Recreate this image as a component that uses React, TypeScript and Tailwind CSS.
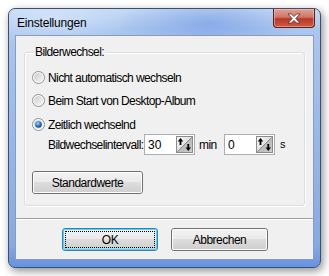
import React from "react";

const font = { fontFamily: '"Liberation Sans", Arial, sans-serif' };

function Radio({ checked }: { checked?: boolean }) {
  return (
    <svg width="13" height="13" viewBox="0 0 13 13" className="shrink-0">
      <defs>
        <linearGradient id={checked ? "rgc" : "rgu"} x1="0" y1="0" x2="1" y2="1">
          <stop offset="0" stopColor="#cbcbcb" />
          <stop offset="1" stopColor="#f7f7f7" />
        </linearGradient>
        <radialGradient id="rdot" cx="0.4" cy="0.35" r="0.7">
          <stop offset="0" stopColor="#a8dcff" />
          <stop offset="0.5" stopColor="#2a80d0" />
          <stop offset="1" stopColor="#0d3f86" />
        </radialGradient>
      </defs>
      <circle cx="6.5" cy="6.5" r="6" fill="#fff" stroke="#8e8f8f" strokeWidth="1" />
      <circle cx="6.5" cy="6.5" r="4.5" fill={`url(#${checked ? "rgc" : "rgu"})`} />
      {checked && <circle cx="6.5" cy="6.5" r="3.3" fill="url(#rdot)" />}
    </svg>
  );
}

function Spin() {
  return (
    <svg width="17" height="17" viewBox="0 0 17 17" className="shrink-0">
      <defs>
        <linearGradient id="spg" x1="0" y1="0" x2="1" y2="1">
          <stop offset="0" stopColor="#f6f6f6" />
          <stop offset="0.5" stopColor="#e2e2e2" />
          <stop offset="0.5" stopColor="#b9b9b9" />
          <stop offset="1" stopColor="#cfcfcf" />
        </linearGradient>
      </defs>
      <rect x="0.5" y="0.5" width="16" height="16" fill="url(#spg)" stroke="#8a8a8a" />
      <line x1="15.5" y1="1.5" x2="1.5" y2="15.5" stroke="#8a8a8a" />
      <path d="M4.5 2 L1.8 5.6 L3.6 5.6 L3.6 9 L5.4 9 L5.4 5.6 L7.2 5.6 Z" fill="#000" />
      <path d="M12.3 15 L9.6 11.4 L11.4 11.4 L11.4 8 L13.2 8 L13.2 11.4 L15 11.4 Z" fill="#000" />
    </svg>
  );
}

function Btn({ children, def, className }: { children: React.ReactNode; def?: boolean; className?: string }) {
  return (
    <div
      className={`relative flex items-center justify-center rounded-[3px] border ${
        def ? "border-[#3c7fb1]" : "border-[#707070]"
      } ${className ?? ""}`}
    >
      <div
        className={`absolute inset-0 rounded-[2px] border ${def ? "border-[#48d7fb]" : "border-[#fcfcfc]"}`}
        style={{ background: "linear-gradient(#f2f2f2 0%, #ebebeb 45%, #dddddd 50%, #cfcfcf 100%)" }}
      />
      {def && <div className="absolute inset-[2px] border border-dotted border-black" />}
      <span className="relative text-[12px] tracking-[-0.5px] text-black">{children}</span>
    </div>
  );
}

export default function App() {
  return (
    <div className="w-[329px] h-[276px] bg-white overflow-hidden pt-[8px] pl-[8px]" style={font}>
      <div
        className="relative w-[313px] h-[260px] rounded-[7px] border border-[#3d4f6c] flex flex-col shadow-[2px_3px_8px_rgba(0,0,0,0.45)]"
        style={{
          background:
            "linear-gradient(180deg, #c6dbf4 0px, #aac7ef 20px, #98b9ea 120px, #86aae4 235px, #6391e0 260px)",
        }}
      >
        <div
          className="absolute inset-0 rounded-[6px] pointer-events-none"
          style={{
            background:
              "radial-gradient(ellipse 90px 30px at 200px 14px, rgba(100,140,225,0.5), rgba(0,0,0,0)), radial-gradient(ellipse 80px 25px at 40px 12px, rgba(230,240,255,0.55), rgba(0,0,0,0))",
          }}
        />
        <div className="relative h-[26px] flex items-start">
          <span className="ml-[8px] mt-[7px] text-[12px] leading-[14px] tracking-[-0.2px] text-black">Einstellungen</span>
          <div
            className="ml-auto mr-[5px] w-[42px] h-[19px] rounded-b-[4px] border border-[#5b1f1c] border-t-0 flex items-center justify-center"
            style={{
              background: "linear-gradient(#e0a197 0%, #cf7565 45%, #b8382a 55%, #d0593f 100%)",
              boxShadow: "inset 0 0 0 1px rgba(255,200,190,0.5)",
            }}
          >
            <svg width="14" height="11" viewBox="0 0 14 11">
              <path
                d="M1 1 L4.5 1 L7 3.6 L9.5 1 L13 1 L8.8 5.5 L13 10 L9.5 10 L7 7.4 L4.5 10 L1 10 L5.2 5.5 Z"
                fill="#ffffff"
                stroke="#5a2a26"
                strokeWidth="0.8"
                strokeLinejoin="round"
              />
            </svg>
          </div>
        </div>
        <div className="relative mx-[6px] mb-[7px] flex-1 border border-[#8c9cb4] bg-[#f0f0f0] flex flex-col">
          <div className="h-[183px] border-b border-[#a0a0a0] shadow-[0_1px_0_#ffffff] pt-[16px] px-[8px]">
            <div className="relative h-[154px] rounded-[3px] border border-[#d5dfe5] shadow-[inset_1px_1px_0_#fff,1px_1px_0_#fff]">
              <span className="absolute left-[9px] top-[-8px] bg-[#f0f0f0] px-[1px] text-[12px] leading-[14px] tracking-[-0.6px] text-black">
                Bilderwechsel:
              </span>
              <div className="flex flex-col pl-[7px] pt-[18px] text-[12px] tracking-[-0.6px] text-black">
                <div className="flex items-center gap-[3px] h-[13px]">
                  <Radio />
                  <span>Nicht automatisch wechseln</span>
                </div>
                <div className="flex items-center gap-[3px] h-[13px] mt-[10px]">
                  <Radio />
                  <span>Beim Start von Desktop-Album</span>
                </div>
                <div className="flex items-center gap-[3px] h-[13px] mt-[11px]">
                  <Radio checked />
                  <span>Zeitlich wechselnd</span>
                </div>
                <div className="flex items-center h-[21px] mt-[3px] pl-[16px]">
                  <span className="w-[96px]">Bildwechselintervall:</span>
                  <div className="w-[51px] h-[21px] border border-[#abadb3] bg-white flex items-center pl-[3px] pr-[1px]">
                    <span className="flex-1 tracking-normal">30</span>
                    <Spin />
                  </div>
                  <span className="ml-[4px] w-[25px]">min</span>
                  <div className="w-[51px] h-[21px] border border-[#abadb3] bg-white flex items-center pl-[3px] pr-[1px]">
                    <span className="flex-1">0</span>
                    <Spin />
                  </div>
                  <span className="ml-[5px] text-[11px]">s</span>
                </div>
                <Btn className="mt-[16px] w-[111px] h-[23px]">Standardwerte</Btn>
              </div>
            </div>
          </div>
          <div className="flex justify-center gap-[13px] pt-[9px] pl-[1px]">
            <Btn def className="w-[96px] h-[23px]">OK</Btn>
            <Btn className="w-[97px] h-[23px]">Abbrechen</Btn>
          </div>
        </div>
      </div>
    </div>
  );
}
